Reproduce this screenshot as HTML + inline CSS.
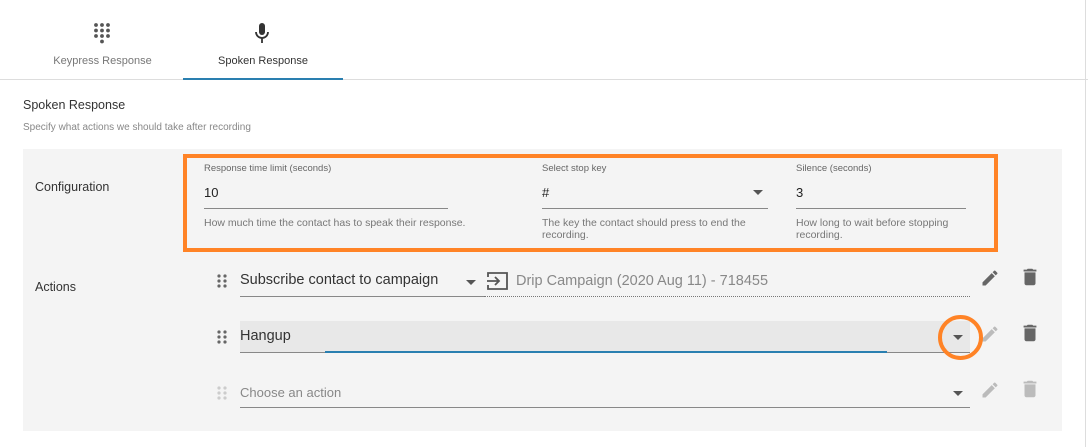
<!DOCTYPE html>
<html><head><meta charset="utf-8"><style>
*{margin:0;padding:0;box-sizing:border-box}
body{width:1088px;height:447px;background:#fff;font-family:"Liberation Sans",sans-serif;position:relative;overflow:hidden;color:#333}
.a{position:absolute;white-space:nowrap}
.lbl{font-size:9.5px;color:#666}
.val{font-size:13px;color:#222}
.help{font-size:10.5px;color:#777;line-height:12px;white-space:normal}
.line{position:absolute;height:1px;background:#888}
.caret{position:absolute;width:0;height:0;border-left:5px solid transparent;border-right:5px solid transparent;border-top:5px solid #555}
</style></head><body>
<svg class="a" style="left:93px;top:22px" width="18" height="24" viewBox="0 0 18 24" fill="#555">
<circle cx="3" cy="3" r="1.9"/><circle cx="9" cy="3" r="1.9"/><circle cx="15" cy="3" r="1.9"/>
<circle cx="3" cy="8.5" r="1.9"/><circle cx="9" cy="8.5" r="1.9"/><circle cx="15" cy="8.5" r="1.9"/>
<circle cx="3" cy="14" r="1.9"/><circle cx="9" cy="14" r="1.9"/><circle cx="15" cy="14" r="1.9"/>
<circle cx="9" cy="19.5" r="1.9"/></svg>
<div class="a" style="left:40px;top:55px;width:125px;text-align:center;font-size:11px;color:#777">Keypress Response</div>
<svg class="a" style="left:254px;top:23px" width="16" height="22" viewBox="0 0 16 22" fill="#333">
<rect x="5" y="0" width="6" height="12" rx="3"/><path d="M2 9 a6 6 0 0 0 12 0" fill="none" stroke="#333" stroke-width="1.8"/><rect x="7.1" y="15" width="1.8" height="5"/></svg>
<div class="a" style="left:183px;top:55px;width:160px;text-align:center;font-size:11px;color:#333">Spoken Response</div>
<div class="a" style="left:0;top:79px;width:1088px;height:1px;background:#ddd"></div>
<div class="a" style="left:183px;top:78px;width:160px;height:2px;background:#2a7fb0"></div>
<div class="a" style="left:1085px;top:0;width:1px;height:447px;background:#ddd"></div>
<div class="a" style="left:23px;top:98px;font-size:12.5px;color:#333">Spoken Response</div>
<div class="a" style="left:23px;top:122px;font-size:10px;color:#888">Specify what actions we should take after recording</div>
<div class="a" style="left:23px;top:149px;width:1039px;height:282px;background:#f4f4f4"></div>
<div class="a" style="left:35px;top:180px;font-size:12.5px;color:#333">Configuration</div>
<div class="a" style="left:35px;top:280px;font-size:12.5px;color:#333">Actions</div>
<div class="a lbl" style="left:204px;top:163px">Response time limit (seconds)</div>
<div class="a val" style="left:204px;top:185px">10</div>
<div class="line" style="left:204px;top:208px;width:244px"></div>
<div class="a help" style="left:204px;top:217px;width:300px">How much time the contact has to speak their response.</div>
<div class="a lbl" style="left:542px;top:163px">Select stop key</div>
<div class="a val" style="left:542px;top:185px">#</div>
<div class="caret" style="left:753px;top:190px"></div>
<div class="line" style="left:542px;top:208px;width:226px"></div>
<div class="a help" style="left:542px;top:217px;width:230px">The key the contact should press to end the recording.</div>
<div class="a lbl" style="left:796px;top:163px">Silence (seconds)</div>
<div class="a val" style="left:796px;top:185px">3</div>
<div class="line" style="left:796px;top:208px;width:170px"></div>
<div class="a help" style="left:796px;top:217px;width:175px">How long to wait before stopping recording.</div>
<div class="a" style="left:183px;top:154px;width:815px;height:98px;border:4px solid #ff8326"></div>
<svg class="a" style="left:216px;top:273px" width="12" height="16" fill="#666"><circle cx="3" cy="3" r="1.6"/><circle cx="9" cy="3" r="1.6"/><circle cx="3" cy="8" r="1.6"/><circle cx="9" cy="8" r="1.6"/><circle cx="3" cy="13" r="1.6"/><circle cx="9" cy="13" r="1.6"/></svg>
<div class="a" style="left:240px;top:272px;font-size:14.5px;color:#333">Subscribe contact to campaign</div>
<div class="caret" style="left:466px;top:280px"></div>
<div class="line" style="left:240px;top:296px;width:244px"></div>
<svg class="a" style="left:486px;top:271px" width="24" height="20" viewBox="0 0 24 20" fill="none" stroke="#555" stroke-width="1.8"><path d="M2 6V2h19v16H2v-4"/><path d="M1 10h12M9 6l4 4-4 4"/></svg>
<div class="a" style="left:516px;top:273px;font-size:14.5px;color:#888">Drip Campaign (2020 Aug 11) - 718455</div>
<div class="a" style="left:484px;top:296px;width:486px;border-top:1px dotted #777"></div>
<svg class="a" style="left:980px;top:268px" width="20" height="20" viewBox="0 0 24 24" fill="#666"><path d="M3 17.25V21h3.75L17.81 9.94l-3.75-3.75L3 17.25zM20.71 7.04a1 1 0 0 0 0-1.41l-2.34-2.34a1 1 0 0 0-1.41 0l-1.830 1.83 3.75 3.75 1.83-1.83z"/></svg>
<svg class="a" style="left:1019px;top:266px" width="22" height="22" viewBox="0 0 24 24" fill="#666"><path d="M6 19c0 1.1.9 2 2 2h8c1.1 0 2-.9 2-2V7H6v12zM19 4h-3.5l-1-1h-5l-1 1H5v2h14V4z"/></svg>
<svg class="a" style="left:216px;top:329px" width="12" height="16" fill="#666"><circle cx="3" cy="3" r="1.6"/><circle cx="9" cy="3" r="1.6"/><circle cx="3" cy="8" r="1.6"/><circle cx="9" cy="8" r="1.6"/><circle cx="3" cy="13" r="1.6"/><circle cx="9" cy="13" r="1.6"/></svg>
<div class="a" style="left:240px;top:321px;width:730px;height:31px;background:#e8e8e8"></div>
<div class="a" style="left:240px;top:328px;font-size:14.5px;color:#333">Hangup</div>
<div class="line" style="left:240px;top:352px;width:730px;background:#888"></div>
<div class="a" style="left:325px;top:351px;width:562px;height:2px;background:#2a7fb0"></div>
<div class="caret" style="left:953px;top:335px"></div>
<svg class="a" style="left:980px;top:324px" width="20" height="20" viewBox="0 0 24 24" fill="#bbb"><path d="M3 17.25V21h3.75L17.81 9.94l-3.75-3.75L3 17.25zM20.71 7.04a1 1 0 0 0 0-1.41l-2.34-2.34a1 1 0 0 0-1.41 0l-1.83 1.83 3.75 3.75 1.83-1.83z"/></svg>
<svg class="a" style="left:1019px;top:322px" width="22" height="22" viewBox="0 0 24 24" fill="#666"><path d="M6 19c0 1.1.9 2 2 2h8c1.1 0 2-.9 2-2V7H6v12zM19 4h-3.5l-1-1h-5l-1 1H5v2h14V4z"/></svg>
<div class="a" style="left:938px;top:315px;width:45px;height:45px;border:4px solid #ff8326;border-radius:50%"></div>
<svg class="a" style="left:216px;top:385px" width="12" height="16" fill="#ccc"><circle cx="3" cy="3" r="1.6"/><circle cx="9" cy="3" r="1.6"/><circle cx="3" cy="8" r="1.6"/><circle cx="9" cy="8" r="1.6"/><circle cx="3" cy="13" r="1.6"/><circle cx="9" cy="13" r="1.6"/></svg>
<div class="a" style="left:240px;top:385px;font-size:13px;color:#888">Choose an action</div>
<div class="caret" style="left:953px;top:391px"></div>
<div class="line" style="left:240px;top:407px;width:730px"></div>
<svg class="a" style="left:980px;top:380px" width="20" height="20" viewBox="0 0 24 24" fill="#bbb"><path d="M3 17.25V21h3.75L17.81 9.94l-3.75-3.75L3 17.25zM20.71 7.04a1 1 0 0 0 0-1.41l-2.34-2.34a1 1 0 0 0-1.41 0l-1.83 1.83 3.75 3.75 1.83-1.83z"/></svg>
<svg class="a" style="left:1019px;top:378px" width="22" height="22" viewBox="0 0 24 24" fill="#bbb"><path d="M6 19c0 1.1.9 2 2 2h8c1.1 0 2-.9 2-2V7H6v12zM19 4h-3.5l-1-1h-5l-1 1H5v2h14V4z"/></svg>
</body></html>
